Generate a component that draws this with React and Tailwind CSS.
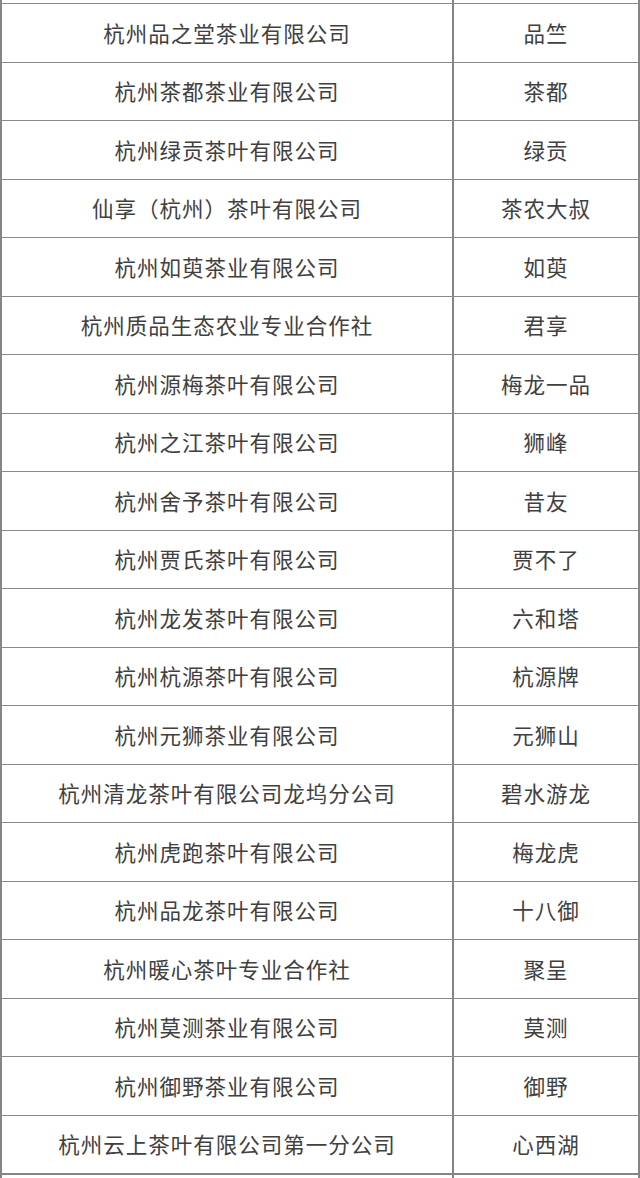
const rows = [
  ['杭州品之堂茶业有限公司', '品竺'],
  ['杭州茶都茶业有限公司', '茶都'],
  ['杭州绿贡茶叶有限公司', '绿贡'],
  ['仙享（杭州）茶叶有限公司', '茶农大叔'],
  ['杭州如萸茶业有限公司', '如萸'],
  ['杭州质品生态农业专业合作社', '君享'],
  ['杭州源梅茶叶有限公司', '梅龙一品'],
  ['杭州之江茶叶有限公司', '狮峰'],
  ['杭州舍予茶叶有限公司', '昔友'],
  ['杭州贾氏茶叶有限公司', '贾不了'],
  ['杭州龙发茶叶有限公司', '六和塔'],
  ['杭州杭源茶叶有限公司', '杭源牌'],
  ['杭州元狮茶业有限公司', '元狮山'],
  ['杭州清龙茶叶有限公司龙坞分公司', '碧水游龙'],
  ['杭州虎跑茶叶有限公司', '梅龙虎'],
  ['杭州品龙茶叶有限公司', '十八御'],
  ['杭州暖心茶叶专业合作社', '聚呈'],
  ['杭州莫测茶业有限公司', '莫测'],
  ['杭州御野茶业有限公司', '御野'],
  ['杭州云上茶叶有限公司第一分公司', '心西湖'],
]

export default function App() {
  return (
    <div
      className="w-[640px] h-[1178px] overflow-hidden bg-white text-[#404040]"
      style={{ fontFamily: '"Microsoft YaHei", "Noto Sans CJK SC", sans-serif' }}
    >
      {/* tail of the previous row */}
      <div className="flex h-[3px]">
        <div className="w-[454px] border-l-2 border-r-2 border-[#858585]" />
        <div className="flex-1 border-r-2 border-[#858585]" />
      </div>

      {rows.map(([company, brand]) => (
        <div key={company} className="flex h-[58.5px] border-t-[1.5px] border-[#8a8a8a]">
          <div className="w-[454px] flex items-center justify-center border-l-2 border-r-2 border-[#858585] text-[21.5px] tracking-[1px]">
            {company}
          </div>
          <div className="flex-1 flex items-center justify-center border-r-2 border-[#858585] text-[21.5px] tracking-[1px]">
            {brand}
          </div>
        </div>
      ))}

      <div className="flex h-[5px] border-t-2 border-[#858585]">
        <div className="w-[454px] border-l-2 border-r-2 border-[#858585]" />
        <div className="flex-1 border-r-2 border-[#858585]" />
      </div>
    </div>
  )
}
